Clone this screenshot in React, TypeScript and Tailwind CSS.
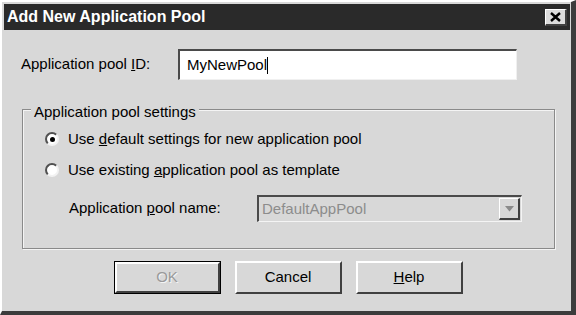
import React from 'react';

const font = { fontFamily: '"Liberation Sans", Arial, sans-serif' };

function Radio({ checked }: { checked?: boolean }) {
  return (
    <div className="w-[14px] h-[14px] rounded-full bg-white border-2 border-t-[#505050] border-l-[#505050] border-b-[#f2f2f2] border-r-[#f2f2f2] flex items-center justify-center shrink-0">
      {checked && <div className="w-[5px] h-[5px] rounded-full bg-black" />}
    </div>
  );
}

function Button({ children, isDefault, disabled }: { children: React.ReactNode; isDefault?: boolean; disabled?: boolean }) {
  return (
    <div className={`w-[107px] h-[33px] ${isDefault ? 'border border-black' : ''}`}>
      <div className="w-full h-full border-t-2 border-l-2 border-t-white border-l-white border-b-2 border-r-2 border-b-[#404040] border-r-[#404040] flex items-center justify-center text-[15px]">
        <span className={disabled ? 'text-[#9a9a9a] [text-shadow:1px_1px_0_#f4f4f4]' : 'text-black'}>{children}</span>
      </div>
    </div>
  );
}

export default function App() {
  return (
    <div
      className="w-[576px] h-[315px] bg-[#d8d8d8] border-t-2 border-l-2 border-t-white border-l-white border-r-[5px] border-b-[4px] border-r-[#3c3c3c] border-b-[#3c3c3c] p-[2px] pr-[1px] flex flex-col select-none"
      style={font}
    >
      {/* title bar */}
      <div className="h-[26px] bg-[#2a2a2a] flex items-center justify-between pl-[3px] pr-[3px]">
        <span className="text-white font-bold text-[16px] leading-none">Add New Application Pool</span>
        <div className="w-[22px] h-[17px] bg-[#dcdcdc] border-t border-l border-white border-b-2 border-r-2 border-b-[#404040] border-r-[#404040] flex items-center justify-center">
          <svg width="11" height="10" viewBox="0 0 11 10">
            <path d="M1 1 L10 9 M10 1 L1 9" stroke="#000" strokeWidth="2.4" />
          </svg>
        </div>
      </div>

      {/* body */}
      <div className="flex flex-col text-[15px] text-black">
        <div className="flex items-center pl-[17px] pt-[19px]">
          <span className="w-[157px]">
            Application pool <span className="underline">I</span>D:
          </span>
          <div className="w-[339px] h-[31px] bg-white border-t-2 border-l-2 border-t-[#4a4a4a] border-l-[#4a4a4a] border-b border-r border-b-[#f0f0f0] border-r-[#f0f0f0] flex items-center pl-[7px]">
            <span>MyNewPool</span>
            <span className="w-[1px] h-[17px] bg-black" />
          </div>
        </div>

        <div className="ml-[18px] mt-[29px] w-[533px] h-[140px] border border-[#8a8a8a] shadow-[1px_1px_0_#f4f4f4,inset_1px_1px_0_#f4f4f4] flex flex-col">
          <span className="self-start -mt-[7px] ml-[8px] px-[3px] h-[18px] leading-[18px] bg-[#d8d8d8]">
            Application pool settings
          </span>
          <div className="flex items-center h-[20px] mt-[8px] pl-[22px] gap-[9px]">
            <Radio checked />
            <span>
              Use <span className="underline">d</span>efault settings for new application pool
            </span>
          </div>
          <div className="flex items-center h-[20px] mt-[11px] pl-[22px] gap-[9px]">
            <Radio />
            <span>
              Use existing <span className="underline">a</span>pplication pool as template
            </span>
          </div>
          <div className="flex items-center mt-[15px] pl-[46px]">
            <span className="w-[188px]">
              Application <span className="underline">p</span>ool name:
            </span>
            <div className="w-[265px] h-[27px] border-t-2 border-l-2 border-t-[#4a4a4a] border-l-[#4a4a4a] border-b border-r border-b-[#f4f4f4] border-r-[#f4f4f4] flex items-center justify-between pl-[3px] pr-[1px]">
              <span className="text-[#8c8c8c]">DefaultAppPool</span>
              <div className="w-[21px] h-[22px] border-t border-l border-t-white border-l-white border-b-2 border-r-2 border-b-[#404040] border-r-[#404040] flex items-center justify-center">
                <svg width="9" height="6" viewBox="0 0 9 6">
                  <path d="M0 0 H9 L4.5 5.5 Z" fill="#8a8a8a" />
                </svg>
              </div>
            </div>
          </div>
        </div>

        <div className="flex justify-center gap-[14px] mt-[12px] pl-[2px]">
          <Button isDefault disabled>OK</Button>
          <Button>Cancel</Button>
          <Button>
            <span className="underline">H</span>elp
          </Button>
        </div>
      </div>
    </div>
  );
}
